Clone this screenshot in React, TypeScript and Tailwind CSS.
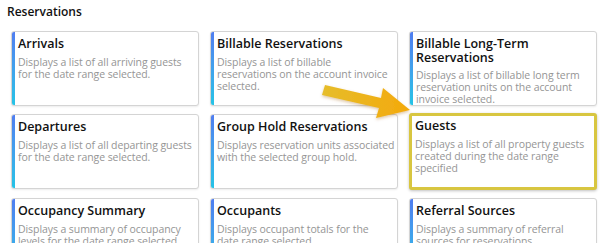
import React from "react";

type Item = { title: string; lines: string[]; highlight?: boolean };

const items: Item[] = [
  { title: "Arrivals", lines: ["Displays a list of all arriving guests", "for the date range selected."] },
  { title: "Billable Reservations", lines: ["Displays a list of billable", "reservations on the account invoice", "selected."] },
  { title: "Billable Long-Term Reservations", lines: ["Displays a list of billable long term", "reservation units on the account", "invoice selected."] },
  { title: "Departures", lines: ["Displays a list of all departing guests", "for the date range selected."] },
  { title: "Group Hold Reservations", lines: ["Displays reservation units associated", "with the selected group hold."] },
  { title: "Guests", lines: ["Displays a list of all property guests", "created during the date range", "specified"], highlight: true },
  { title: "Occupancy Summary", lines: ["Displays a summary of occupancy", "levels for the date range selected."] },
  { title: "Occupants", lines: ["Displays occupant totals for the", "date range selected."] },
  { title: "Referral Sources", lines: ["Displays a summary of referral", "sources for reservations."] },
];

function Desc({ lines }: { lines: string[] }) {
  return (
    <div className="mt-[5px] text-[10.5px] leading-[12px] tracking-[-0.08px] text-[#959595]">
      {lines.map((l) => (
        <span key={l} className="block whitespace-nowrap">
          {l}
        </span>
      ))}
    </div>
  );
}

function Card({ item }: { item: Item }) {
  if (item.highlight) {
    return (
      <div className="h-[77px] -mt-[1px] rounded-[3px] border-[3px] border-[#d8c640] bg-white pl-[3px] pr-[4px] pt-[3px] shadow-[0_1px_3px_rgba(0,0,0,0.25)]">
        <div className="text-[12.5px] font-semibold leading-[13.5px] text-[#111]">{item.title}</div>
        <Desc lines={item.lines} />
      </div>
    );
  }
  return (
    <div className="relative flex h-[75px] overflow-hidden rounded-[3px] border border-[#d4d4d4] bg-white shadow-[0_1px_2px_rgba(0,0,0,0.08)]">
      <div className="w-[3px] shrink-0 bg-gradient-to-b from-[#4f7df0] to-[#22c3e6]" />
      <div className="min-w-0 flex-1 pl-[3px] pr-0 pt-[5px]">
        <div className="text-[12.5px] font-semibold leading-[13.5px] text-[#111]">{item.title}</div>
        <Desc lines={item.lines} />
      </div>
    </div>
  );
}

export default function App() {
  return (
    <div
      className="relative h-[243px] w-[608px] overflow-hidden bg-white px-[11px]"
      style={{ fontFamily: '"Open Sans", "Noto Sans", sans-serif' }}
    >
      <div className="-ml-[4px] pt-[4px] text-[12px] font-semibold leading-[15px] text-[#111]">Reservations</div>
      <div className="mt-[12px] grid grid-cols-3 gap-x-[11px] gap-y-[8px]">
        {items.map((it) => (
          <Card key={it.title} item={it} />
        ))}
      </div>
      <svg
        className="pointer-events-none absolute left-0 top-0"
        width="608"
        height="243"
        viewBox="0 0 608 243"
      >
        <defs>
          <linearGradient id="ag" x1="0" y1="0" x2="1" y2="0">
            <stop offset="0" stopColor="#e6bd2a" />
            <stop offset="1" stopColor="#f4a90c" />
          </linearGradient>
          <filter id="sh" x="-20%" y="-50%" width="140%" height="200%">
            <feDropShadow dx="0" dy="1.5" stdDeviation="1.5" floodColor="#a05a00" floodOpacity="0.35" />
          </filter>
        </defs>
        <g filter="url(#sh)">
          <path
            d="M325 85 L381 98 L383 88 L410 110 L376 118 L379 108 L322 95 Z"
            fill="url(#ag)"
          />
        </g>
      </svg>
    </div>
  );
}
